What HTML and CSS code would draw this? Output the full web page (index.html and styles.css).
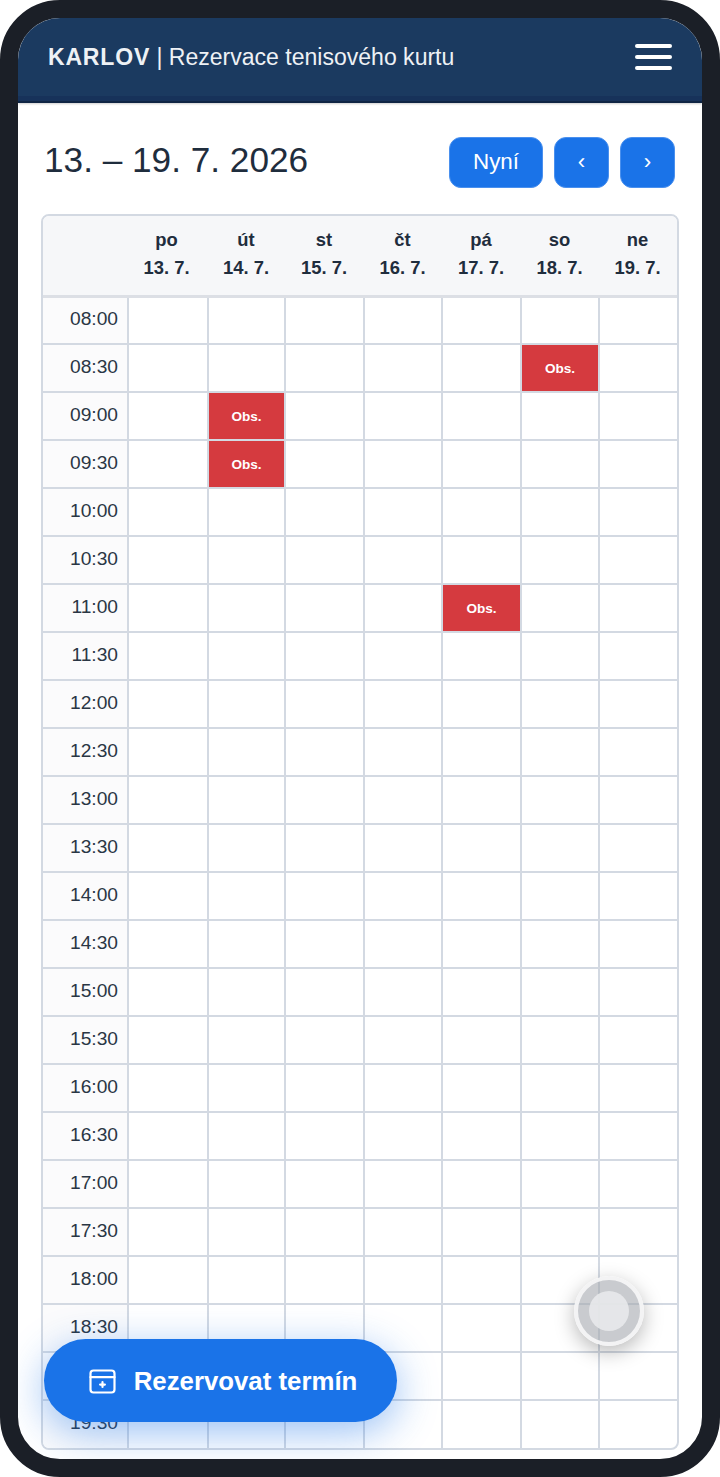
FILE: index.html
```html
<!DOCTYPE html>
<html lang="cs">
<head>
    <meta charset="UTF-8">
    <meta name="viewport" content="width=device-width, initial-scale=1.0">
    <title>Rezervace tenisového kurtu</title>
    <link rel="stylesheet" href="styles.css">
</head>
<body>
    <div class="phone">
        <header class="topbar">
            <div class="brand"><strong>KARLOV</strong> | Rezervace tenisového kurtu</div>
            <div class="burger"><span></span><span></span><span></span></div>
        </header>
        <main class="content">
            <div class="toolbar">
                <h1>13. – 19. 7. 2026</h1>
                <div class="nav">
                    <button class="btn btn-now">Nyní</button>
                    <button class="btn btn-arrow">‹</button>
                    <button class="btn btn-arrow">›</button>
                </div>
            </div>
            <div class="calendar">
                <table>
                    <thead>
                        <tr>
                            <th class="time"></th>
                            <th>po<br>13. 7.</th>
                            <th>út<br>14. 7.</th>
                            <th>st<br>15. 7.</th>
                            <th>čt<br>16. 7.</th>
                            <th>pá<br>17. 7.</th>
                            <th>so<br>18. 7.</th>
                            <th>ne<br>19. 7.</th>
                        </tr>
                    </thead>
                    <tbody>
                        <tr><td class="time">08:00</td><td></td><td></td><td></td><td></td><td></td><td></td><td></td></tr>
                        <tr><td class="time">08:30</td><td></td><td></td><td></td><td></td><td></td><td class="busy">Obs.</td><td></td></tr>
                        <tr><td class="time">09:00</td><td></td><td class="busy">Obs.</td><td></td><td></td><td></td><td></td><td></td></tr>
                        <tr><td class="time">09:30</td><td></td><td class="busy">Obs.</td><td></td><td></td><td></td><td></td><td></td></tr>
                        <tr><td class="time">10:00</td><td></td><td></td><td></td><td></td><td></td><td></td><td></td></tr>
                        <tr><td class="time">10:30</td><td></td><td></td><td></td><td></td><td></td><td></td><td></td></tr>
                        <tr><td class="time">11:00</td><td></td><td></td><td></td><td></td><td class="busy">Obs.</td><td></td><td></td></tr>
                        <tr><td class="time">11:30</td><td></td><td></td><td></td><td></td><td></td><td></td><td></td></tr>
                        <tr><td class="time">12:00</td><td></td><td></td><td></td><td></td><td></td><td></td><td></td></tr>
                        <tr><td class="time">12:30</td><td></td><td></td><td></td><td></td><td></td><td></td><td></td></tr>
                        <tr><td class="time">13:00</td><td></td><td></td><td></td><td></td><td></td><td></td><td></td></tr>
                        <tr><td class="time">13:30</td><td></td><td></td><td></td><td></td><td></td><td></td><td></td></tr>
                        <tr><td class="time">14:00</td><td></td><td></td><td></td><td></td><td></td><td></td><td></td></tr>
                        <tr><td class="time">14:30</td><td></td><td></td><td></td><td></td><td></td><td></td><td></td></tr>
                        <tr><td class="time">15:00</td><td></td><td></td><td></td><td></td><td></td><td></td><td></td></tr>
                        <tr><td class="time">15:30</td><td></td><td></td><td></td><td></td><td></td><td></td><td></td></tr>
                        <tr><td class="time">16:00</td><td></td><td></td><td></td><td></td><td></td><td></td><td></td></tr>
                        <tr><td class="time">16:30</td><td></td><td></td><td></td><td></td><td></td><td></td><td></td></tr>
                        <tr><td class="time">17:00</td><td></td><td></td><td></td><td></td><td></td><td></td><td></td></tr>
                        <tr><td class="time">17:30</td><td></td><td></td><td></td><td></td><td></td><td></td><td></td></tr>
                        <tr><td class="time">18:00</td><td></td><td></td><td></td><td></td><td></td><td></td><td></td></tr>
                        <tr><td class="time">18:30</td><td></td><td></td><td></td><td></td><td></td><td></td><td></td></tr>
                        <tr><td class="time">19:00</td><td></td><td></td><td></td><td></td><td></td><td></td><td></td></tr>
                        <tr><td class="time">19:30</td><td></td><td></td><td></td><td></td><td></td><td></td><td></td></tr>
                    </tbody>
                </table>
            </div>
        </main>
        <button class="fab">
            <svg width="27" height="25" viewBox="0 0 27 25" fill="none" stroke="#fff" stroke-width="2.2" stroke-linecap="round">
                <rect x="1.5" y="1.5" width="24" height="22" rx="3"/>
                <path d="M1.5 8.2H25.5"/>
                <path d="M13.5 13.2V18M11.1 15.6H15.9"/>
            </svg>
            Rezervovat termín
        </button>
        <div class="touch"><span></span></div>
    </div>
</body>
</html>
```

FILE: styles.css
```css
* {
    box-sizing: border-box;
}
html, body {
    margin: 0;
    padding: 0;
    background: #fff;
}
body {
    font-family: "Liberation Sans", Arial, sans-serif;
    color: #1f2d3d;
}
.phone {
    position: relative;
    width: 720px;
    height: 1477px;
    border: 18px solid #1b1f27;
    border-radius: 60px;
    overflow: hidden;
    background: #fff;
}
.topbar {
    position: relative;
    height: 85px;
    padding: 0 30px 7px;
    background: linear-gradient(#1b3a60 0, #1b3a60 78px, #17325a 78px, #17325a 83px, #0f2544 83px);
    box-shadow: 0 1px 2px rgba(0, 0, 0, 0.2);
    display: flex;
    align-items: center;
    justify-content: space-between;
    color: #eef1f5;
}
.brand {
    font-size: 23.04px;
}
.brand strong {
    letter-spacing: 0.8px;
}
.burger {
    display: flex;
    flex-direction: column;
    gap: 7px;
    width: 37px;
}
.burger span {
    height: 4px;
    border-radius: 2px;
    background: #fff;
}
.content {
    padding: 33.5px 23px 0;
}
.toolbar {
    display: flex;
    align-items: center;
    justify-content: space-between;
    padding: 0 4px 0 3px;
    margin-bottom: 26px;
}
h1 {
    margin: 0 0 5px;
    font-size: 35.2px;
    font-weight: 400;
    color: #1f2d3d;
}
.nav {
    display: flex;
    gap: 11px;
}
.btn {
    height: 51.5px;
    border: 1px solid #4a90ee;
    border-radius: 12px;
    background: #1a73e8;
    color: #fff;
    font-family: inherit;
    font-size: 22.4px;
}
.btn-now {
    width: 94px;
}
.btn-arrow {
    width: 55px;
}
.calendar {
    border: 2px solid #d3d9e2;
    border-radius: 8px;
    overflow: hidden;
}
table {
    width: 100%;
    border-collapse: collapse;
    table-layout: fixed;
}
th {
    height: 80px;
    padding: 0 1px 3px 0;
    background: #f6f7f9;
    border-bottom: 3px solid #dcdfe5;
    font-size: 18.4px;
    line-height: 28px;
    font-weight: 700;
    color: #1f2d3d;
}
th:nth-child(1) { width: 85px; }
th:nth-child(2) { width: 80px; padding-right: 3px; }
th:nth-child(3) { width: 77px; }
th:nth-child(4) { width: 79px; }
th:nth-child(5) { width: 78px; }
th:nth-child(6) { width: 79px; }
th:nth-child(7) { width: 78px; }
th:nth-child(8) { width: 78px; }
td {
    height: 48px;
    padding: 0;
    border: 2px solid #d3d9e2;
    text-align: center;
}
tr td:first-child {
    border-left: none;
}
tr td:last-child {
    border-right: none;
}
tbody tr:last-child td {
    border-bottom: none;
}
td.time {
    padding: 0 9px 3px 0;
    background: #fbfbfc;
    text-align: right;
    font-size: 19.2px;
    color: #2a3644;
}
td.busy {
    background: #d53a3f;
    color: #fff;
    font-size: 13.6px;
    font-weight: 700;
}
.fab {
    position: absolute;
    left: 26px;
    top: 1321px;
    width: 353px;
    height: 83px;
    padding: 2px 0 0 5px;
    border: none;
    border-radius: 42px;
    background: #1a73e8;
    box-shadow: 0 10px 40px rgba(26, 115, 232, 0.45);
    color: #fff;
    font-family: inherit;
    font-size: 25.8px;
    font-weight: 700;
    display: flex;
    align-items: center;
    justify-content: center;
    gap: 18px;
}
.touch {
    position: absolute;
    left: 556px;
    top: 1258px;
    width: 70px;
    height: 70px;
    border-radius: 50%;
    border: 4px solid rgba(245, 245, 247, 0.95);
    background: rgba(165, 168, 175, 0.6);
    box-shadow: 0 6px 20px rgba(0, 0, 0, 0.28);
    display: flex;
    align-items: center;
    justify-content: center;
}
.touch span {
    width: 40px;
    height: 40px;
    border-radius: 50%;
    background: rgba(232, 233, 235, 0.9);
}
```
